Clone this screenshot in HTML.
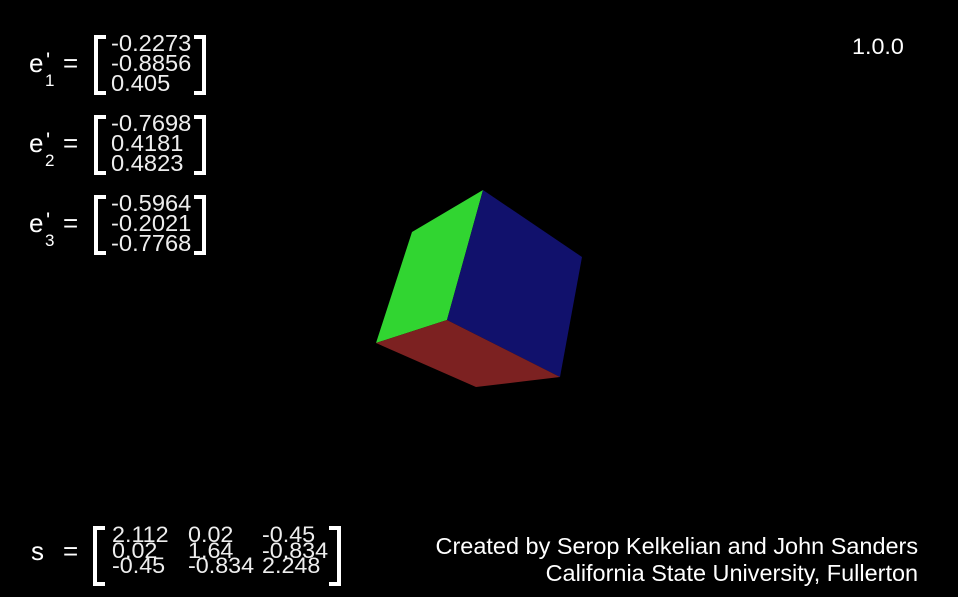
<!DOCTYPE html>
<html><head><meta charset="utf-8"><style>
html,body{margin:0;padding:0;background:#000;}
body{width:958px;height:597px;position:relative;overflow:hidden;font-family:"Liberation Sans",sans-serif;color:#fff;}
.t{position:absolute;white-space:pre;transform-origin:0 0;}
.num{font-size:23px;line-height:20px;color:#eee;transform:scaleX(1.03);}
.lab{font-size:26px;}
.sub{font-size:17px;}
.pr{font-size:22px;}
</style></head><body>
<svg width="958" height="597" style="position:absolute;left:0;top:0">
<polygon points="376,343 412,232 483,190 447,320" fill="#31d531"/>
<polygon points="483,190 582,257 560,377 447,320" fill="#11116c"/>
<polygon points="376,343 447,320 560,377 476,387" fill="#7c2121"/>
<g fill="none" stroke="#fff" stroke-width="4">
<path d="M106,37 H96 V93 H106"/>
<path d="M194,37 H204 V93 H194"/>
<path d="M106,117 H96 V173 H106"/>
<path d="M194,117 H204 V173 H194"/>
<path d="M106,197 H96 V253 H106"/>
<path d="M194,197 H204 V253 H194"/>
<path d="M105,528 H95 V584 H105"/>
<path d="M329,528 H339 V584 H329"/>
</g>
</svg>
<div class="t lab" style="left:29px;top:48px">e</div>
<div class="t pr" style="left:46px;top:48px">'</div>
<div class="t sub" style="left:45px;top:71px">1</div>
<div class="t lab" style="left:63px;top:48px">=</div>
<div class="t lab" style="left:29px;top:128px">e</div>
<div class="t pr" style="left:46px;top:128px">'</div>
<div class="t sub" style="left:45px;top:151px">2</div>
<div class="t lab" style="left:63px;top:128px">=</div>
<div class="t lab" style="left:29px;top:208px">e</div>
<div class="t pr" style="left:46px;top:208px">'</div>
<div class="t sub" style="left:45px;top:231px">3</div>
<div class="t lab" style="left:63px;top:208px">=</div>
<div class="t num" style="left:111px;top:33px">-0.2273
-0.8856
0.405</div>
<div class="t num" style="left:111px;top:113px">-0.7698
0.4181
0.4823</div>
<div class="t num" style="left:111px;top:193px">-0.5964
-0.2021
-0.7768</div>
<div class="t lab" style="left:31px;top:536px">s</div>
<div class="t lab" style="left:63px;top:536px">=</div>
<div class="t num" style="left:112px;top:527px;line-height:15.5px;font-size:22px;transform:scaleX(1.06)">2.112
0.02
-0.45</div>
<div class="t num" style="left:188px;top:527px;line-height:15.5px;font-size:22px;transform:scaleX(1.06)">0.02
1.64
-0.834</div>
<div class="t num" style="left:262px;top:527px;line-height:15.5px;font-size:22px;transform:scaleX(1.06)">-0.45
-0.834
2.248</div>
<div class="t" style="left:852px;top:34px;font-size:22px;transform:scaleX(1.06)">1.0.0</div>
<div class="t" style="right:40px;top:533px;font-size:23px;line-height:27px;text-align:right;transform-origin:100% 0;transform:scaleX(1.02)">Created by Serop Kelkelian and John Sanders
California State University, Fullerton</div>
</body></html>
